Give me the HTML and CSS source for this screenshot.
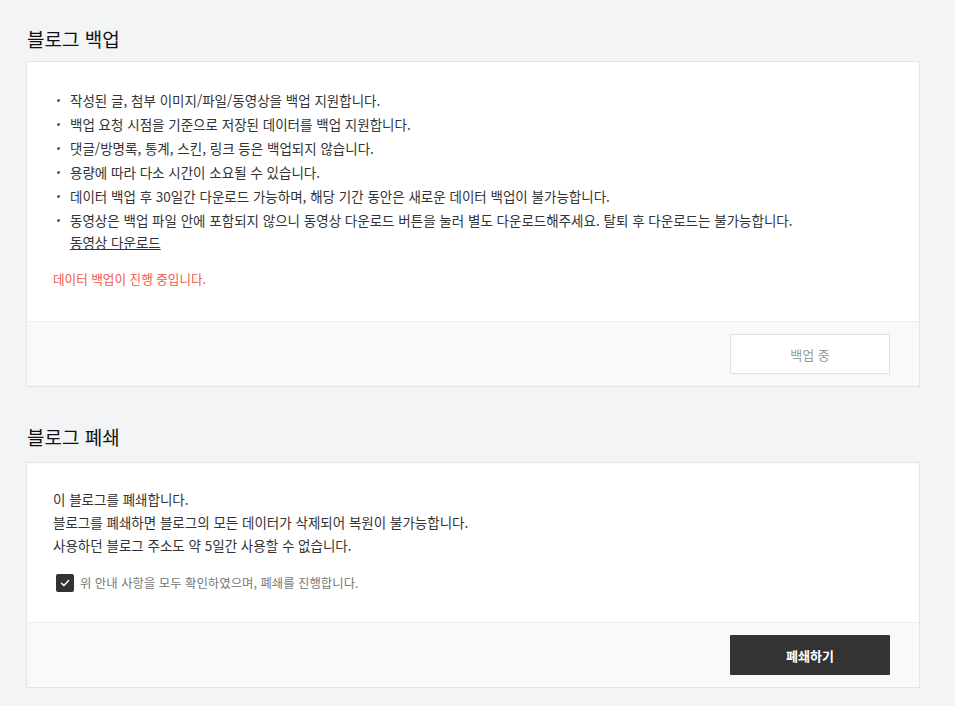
FILE: index.html
```html
<!DOCTYPE html>
<html lang="ko">
<head>
  <meta charset="UTF-8" />
  <meta name="viewport" content="width=device-width, initial-scale=1.0"/>
  <title>블로그 관리</title>
  <link rel="stylesheet" href="styles.css">
</head>
<body>
  <div class="contenedor">
    <section class="seccion">
      <h2 class="titulo">블로그 백업</h2>
      <div class="tarjeta">
        <div class="tarjeta-cuerpo">
          <ul class="lista">
            <li><span>작성된 글, 첨부 이미지/파일/동영상을 백업 지원합니다.</span></li>
            <li><span>백업 요청 시점을 기준으로 저장된 데이터를 백업 지원합니다.</span></li>
            <li><span>댓글/방명록, 통계, 스킨, 링크 등은 백업되지 않습니다.</span></li>
            <li><span>용량에 따라 다소 시간이 소요될 수 있습니다.</span></li>
            <li><span>데이터 백업 후 30일간 다운로드 가능하며, 해당 기간 동안은 새로운 데이터 백업이 불가능합니다.</span></li>
            <li>
              <span>동영상은 백업 파일 안에 포함되지 않으니 동영상 다운로드 버튼을 눌러 별도 다운로드해주세요. 탈퇴 후 다운로드는 불가능합니다.
                <a href="#" class="enlace">동영상 다운로드</a>
              </span>
            </li>
          </ul>
          <p class="aviso">데이터 백업이 진행 중입니다.</p>
        </div>
        <div class="tarjeta-pie">
          <button class="boton boton-claro" disabled>백업 중</button>
        </div>
      </div>
    </section>

    <section class="seccion seccion-cierre">
      <h2 class="titulo">블로그 폐쇄</h2>
      <div class="tarjeta">
        <div class="tarjeta-cuerpo cuerpo-cierre">
          <p class="texto">이 블로그를 폐쇄합니다.<br>블로그를 폐쇄하면 블로그의 모든 데이터가 삭제되어 복원이 불가능합니다.<br>사용하던 블로그 주소도 약 5일간 사용할 수 없습니다.</p>
          <label class="confirmar">
            <span class="casilla">
              <svg width="12" height="12" viewBox="0 0 12 12"><path d="M2.5 6.2 L5 8.6 L9.6 3.6" fill="none" stroke="#fff" stroke-width="1.5" stroke-linecap="round" stroke-linejoin="round"/></svg>
            </span>
            위 안내 사항을 모두 확인하였으며, 폐쇄를 진행합니다.
          </label>
        </div>
        <div class="tarjeta-pie">
          <button class="boton boton-oscuro">폐쇄하기</button>
        </div>
      </div>
    </section>
  </div>
</body>
</html>
```

FILE: styles.css
```css
body {
  margin: 0;
  background-color: #f3f4f6;
  color: #333;
  font-family: "Noto Sans CJK KR", "Noto Sans", sans-serif;
  font-size: 13.5px;
}

.contenedor {
  width: 894px;
  margin-left: 26px;
  padding-top: 25px;
}

.seccion-cierre {
  margin-top: 36px;
}

.titulo {
  margin: 0 0 8px 1px;
  font-size: 19px;
  line-height: 28px;
  font-weight: 400;
  color: #111;
}

.seccion-cierre .titulo {
  margin-bottom: 11px;
}

.tarjeta {
  background-color: #fff;
  border: 1px solid #e3e4e7;
}

.tarjeta-cuerpo {
  padding: 26px 26px 32px;
}

.lista {
  list-style: none;
  margin: 0;
  padding: 0;
}

.lista li {
  display: flex;
  line-height: 24px;
}

.lista li::before {
  content: "";
  flex: none;
  width: 3px;
  height: 3px;
  margin: 11px 10px 0 4px;
  border-radius: 50%;
  background-color: #555;
}

.enlace {
  display: block;
  line-height: 20px;
  color: #333;
  text-decoration: underline;
}

.aviso {
  margin: 17px 0 0;
  line-height: 20px;
  font-size: 12.6px;
  color: #ef5a4a;
}

.tarjeta-pie {
  display: flex;
  justify-content: flex-end;
  padding: 12px 29px 12px;
  background-color: #f8f9fa;
  border-top: 1px solid #eceef0;
}

.boton {
  width: 160px;
  height: 40px;
  font-family: inherit;
  font-size: 13px;
  border-radius: 1px;
  cursor: pointer;
}

.boton-claro {
  background-color: #fff;
  border: 1px solid #dfe0e3;
  color: #999;
  cursor: default;
}

.boton-oscuro {
  background-color: #333;
  border: none;
  color: #fff;
  font-weight: bold;
}

.tarjeta-cuerpo.cuerpo-cierre {
  padding-top: 25px;
  padding-bottom: 30px;
}

.texto {
  margin: 0;
  line-height: 23px;
}

.confirmar {
  display: flex;
  align-items: center;
  margin-top: 17px;
  margin-left: 3px;
  color: #777;
  font-size: 12.4px;
  line-height: 18px;
}

.casilla {
  display: flex;
  align-items: center;
  justify-content: center;
  width: 18px;
  height: 18px;
  margin-right: 6px;
  border-radius: 2px;
  background-color: #333;
}
```
